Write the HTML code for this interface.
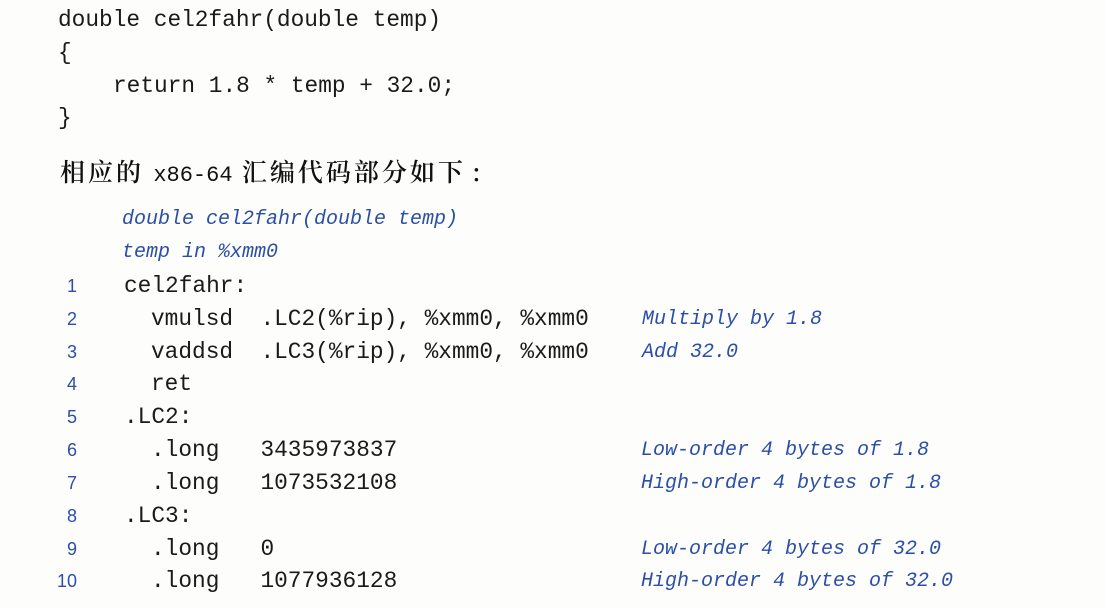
<!DOCTYPE html>
<html><head><meta charset="utf-8"><style>
body{margin:0;width:1105px;height:608px;background:#fdfdfc;position:relative;overflow:hidden;color:#1a1a1a}
.m{position:absolute;font-family:"Liberation Mono",monospace;font-size:22.8px;white-space:pre;line-height:1}
.b{position:absolute;font-family:"Liberation Mono",monospace;font-style:italic;font-size:20px;color:#2b4fa6;white-space:pre;line-height:1}
.n{position:absolute;font-family:"Liberation Sans",sans-serif;font-size:18px;color:#2b4fa6;width:30px;text-align:right;left:47px;line-height:1}
.c{position:absolute;font-family:"Noto Serif CJK SC",serif;font-size:25px;letter-spacing:3px;white-space:pre;line-height:1;color:#111;font-weight:600}
</style></head><body>
<div class="m" style="left:58px;top:9px">double cel2fahr(double temp)</div>
<div class="m" style="left:58px;top:42px">{</div>
<div class="m" style="left:113px;top:75px">return 1.8 * temp + 32.0;</div>
<div class="m" style="left:58px;top:107px">}</div>
<div class="c" style="left:60px;top:159px">相应的 <span style="font-family:'Liberation Mono',monospace;font-size:22px;letter-spacing:0;font-weight:normal">x86-64</span> 汇编代码部分如下<span style="letter-spacing:0">&nbsp;:</span></div>
<div class="b" style="left:122px;top:210px">double cel2fahr(double temp)</div>
<div class="b" style="left:122px;top:243px">temp in %xmm0</div>

<div class="n" style="top:277px">1</div><div class="m" style="left:124px;top:275px">cel2fahr:</div>
<div class="n" style="top:310px">2</div><div class="m" style="left:151px;top:308px">vmulsd  .LC2(%rip), %xmm0, %xmm0</div><div class="b" style="left:642px;top:310px">Multiply by 1.8</div>
<div class="n" style="top:343px">3</div><div class="m" style="left:151px;top:341px">vaddsd  .LC3(%rip), %xmm0, %xmm0</div><div class="b" style="left:642px;top:343px">Add 32.0</div>
<div class="n" style="top:375px">4</div><div class="m" style="left:151px;top:373px">ret</div>
<div class="n" style="top:408px">5</div><div class="m" style="left:124px;top:406px">.LC2:</div>
<div class="n" style="top:441px">6</div><div class="m" style="left:151px;top:439px">.long   3435973837</div><div class="b" style="left:641px;top:441px">Low-order 4 bytes of 1.8</div>
<div class="n" style="top:474px">7</div><div class="m" style="left:151px;top:472px">.long   1073532108</div><div class="b" style="left:641px;top:474px">High-order 4 bytes of 1.8</div>
<div class="n" style="top:507px">8</div><div class="m" style="left:124px;top:505px">.LC3:</div>
<div class="n" style="top:540px">9</div><div class="m" style="left:151px;top:538px">.long   0</div><div class="b" style="left:641px;top:540px">Low-order 4 bytes of 32.0</div>
<div class="n" style="top:572px">10</div><div class="m" style="left:151px;top:570px">.long   1077936128</div><div class="b" style="left:641px;top:572px">High-order 4 bytes of 32.0</div>
</body></html>
